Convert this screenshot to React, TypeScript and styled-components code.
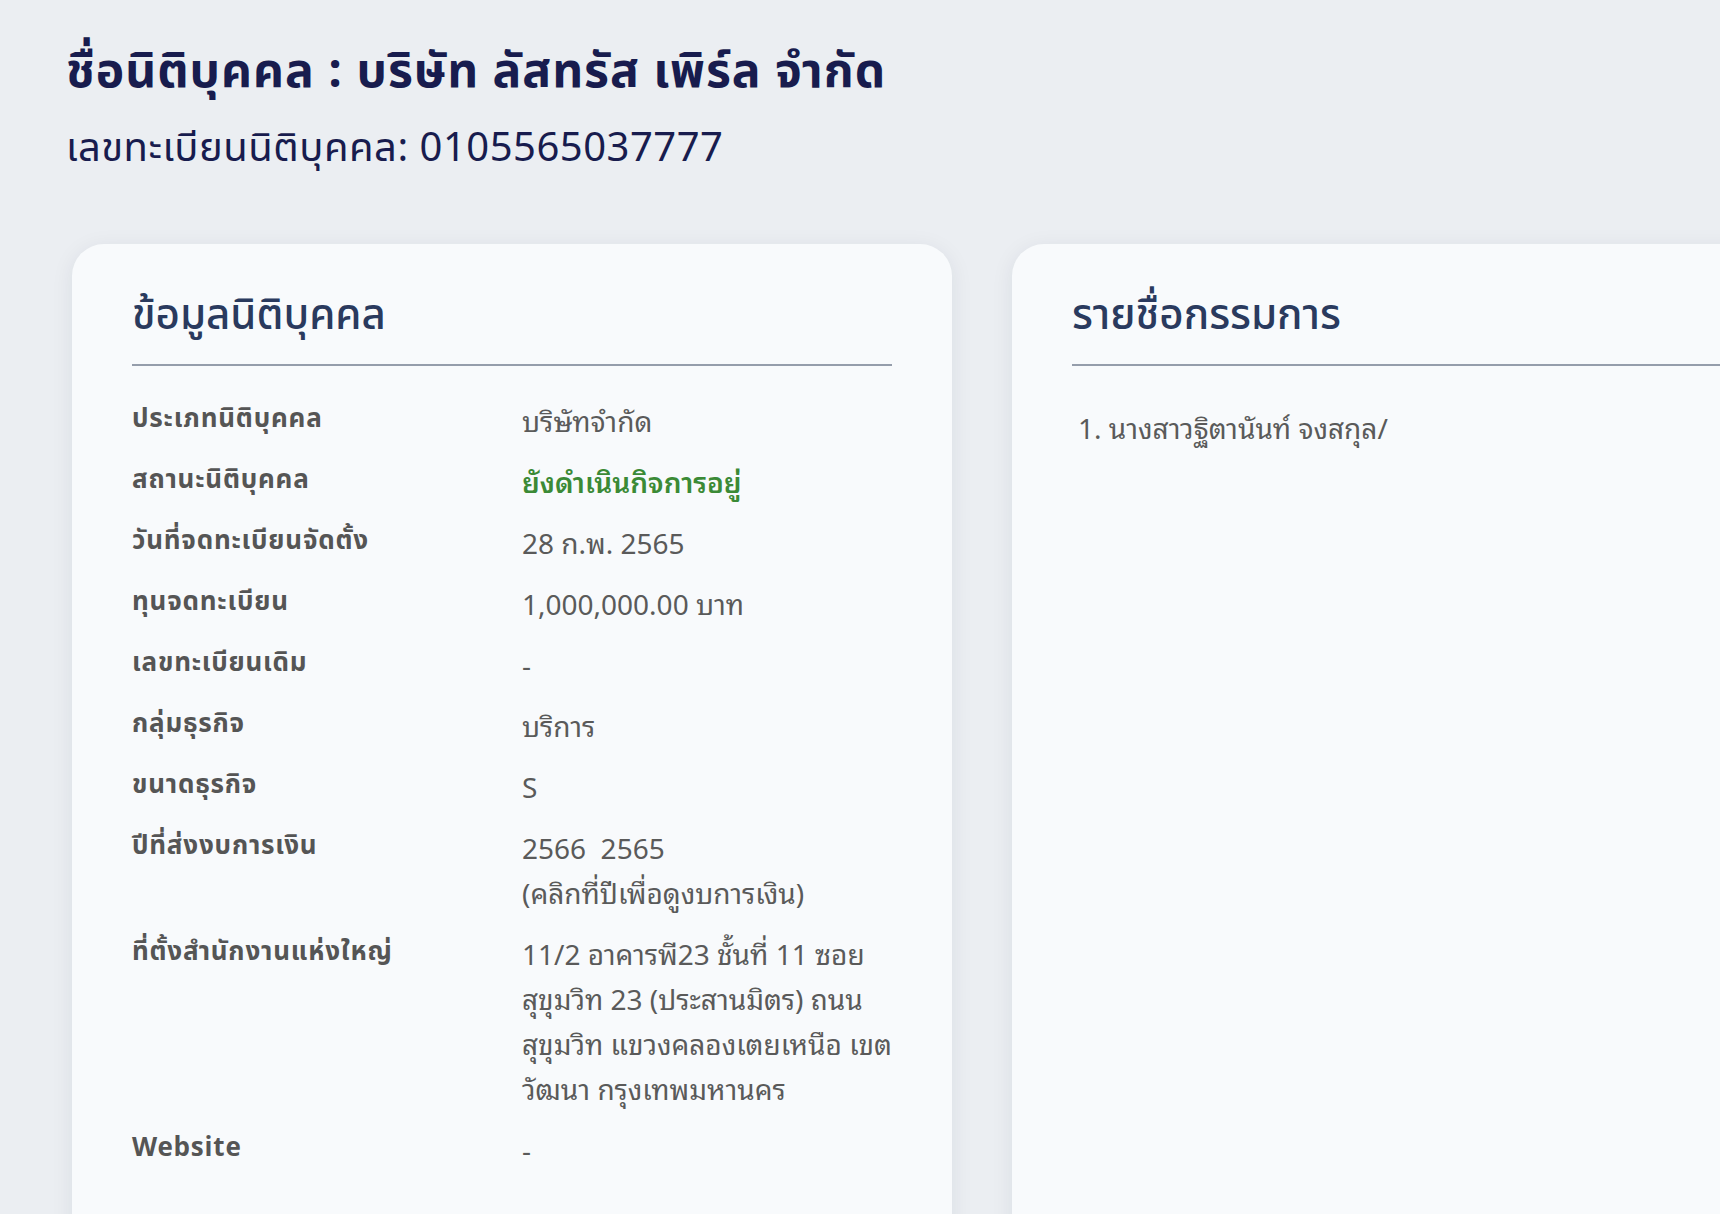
import { Fragment } from 'react';
import styled, { createGlobalStyle } from 'styled-components';

const GlobalStyle = createGlobalStyle`
  html, body {
    margin: 0;
    padding: 0;
    background: #ebeef2;
    overflow: hidden;
  }
  body {
    font-family: "Noto Sans Thai", "Noto Sans", sans-serif;
  }
`;

const Page = styled.div`
  width: 1720px;
  height: 1214px;
  padding: 37px 0 0 66px;
  box-sizing: border-box;
  overflow: hidden;
`;

const CompanyName = styled.h1`
  margin: 0;
  font-family: "Noto Sans Thai", "Noto Sans", sans-serif;
  font-size: 48px;
  font-weight: 700;
  line-height: 72px;
  letter-spacing: 1px;
  color: #181c4e;
`;

const RegNumber = styled.h2`
  margin: 10px 0 0;
  font-family: "Noto Sans Thai", "Noto Sans", sans-serif;
  font-size: 40px;
  font-weight: 400;
  line-height: 60px;
  letter-spacing: 0.5px;
  color: #181c4e;
`;

const CardRow = styled.div`
  display: flex;
  gap: 60px;
  margin: 65px 0 0 6px;
`;

const Card = styled.section`
  flex: 0 0 880px;
  height: 1040px;
  box-sizing: border-box;
  padding: 43px 60px;
  background: #f8fafc;
  border-radius: 32px;
  box-shadow: 0 4px 22px rgba(30, 40, 60, 0.08);
`;

const CardTitle = styled.h3`
  margin: 0;
  padding-bottom: 18px;
  font-family: "Noto Sans Thai", "Noto Sans", sans-serif;
  font-size: 42px;
  font-weight: 500;
  line-height: 1.4;
  color: #2a3a5e;
  border-bottom: 2px solid #959dab;
`;

const InfoGrid = styled.dl`
  display: grid;
  grid-template-columns: 1fr 1fr;
  column-gap: 20px;
  row-gap: 16px;
  margin: 31px 0 0;
`;

const Label = styled.dt`
  margin: 0;
  font-family: "Noto Sans Thai", "Noto Sans", sans-serif;
  font-size: 26px;
  font-weight: 700;
  line-height: 45px;
  letter-spacing: 0.8px;
  color: #555555;
`;

const Value = styled.dd<{ $status?: boolean }>`
  margin: 0;
  font-family: "Noto Sans Thai Looped", "Noto Sans Thai", "Noto Sans", sans-serif;
  font-size: 28px;
  font-weight: ${(p) => (p.$status ? 600 : 400)};
  line-height: 45px;
  color: ${(p) => (p.$status ? '#3b8a36' : '#5a5a5a')};
`;

const Line = styled.div`
  white-space: pre;
`;

const DirectorList = styled.ol`
  list-style: none;
  margin: 38px 0 0;
  padding: 0 0 0 6px;
`;

const Director = styled.li`
  font-family: "Noto Sans Thai Looped", "Noto Sans Thai", "Noto Sans", sans-serif;
  font-size: 28px;
  line-height: 45px;
  color: #5a5a5a;
`;

const info: { label: string; value: string[]; status?: boolean }[] = [
  { label: 'ประเภทนิติบุคคล', value: ['บริษัทจำกัด'] },
  { label: 'สถานะนิติบุคคล', value: ['ยังดำเนินกิจการอยู่'], status: true },
  { label: 'วันที่จดทะเบียนจัดตั้ง', value: ['28 ก.พ. 2565'] },
  { label: 'ทุนจดทะเบียน', value: ['1,000,000.00 บาท'] },
  { label: 'เลขทะเบียนเดิม', value: ['-'] },
  { label: 'กลุ่มธุรกิจ', value: ['บริการ'] },
  { label: 'ขนาดธุรกิจ', value: ['S'] },
  { label: 'ปีที่ส่งงบการเงิน', value: ['2566  2565', '(คลิกที่ปีเพื่อดูงบการเงิน)'] },
  {
    label: 'ที่ตั้งสำนักงานแห่งใหญ่',
    value: [
      '11/2 อาคารพี23 ชั้นที่ 11 ซอย',
      'สุขุมวิท 23 (ประสานมิตร) ถนน',
      'สุขุมวิท แขวงคลองเตยเหนือ เขต',
      'วัฒนา กรุงเทพมหานคร',
    ],
  },
  { label: 'Website', value: ['-'] },
];

const App = () => {
  return (
    <>
      <GlobalStyle />
      <Page>
        <CompanyName>ชื่อนิติบุคคล : บริษัท ลัสทรัส เพิร์ล จำกัด</CompanyName>
        <RegNumber>เลขทะเบียนนิติบุคคล: 0105565037777</RegNumber>
        <CardRow>
          <Card>
            <CardTitle>ข้อมูลนิติบุคคล</CardTitle>
            <InfoGrid>
              {info.map((row) => (
                <Fragment key={row.label}>
                  <Label>{row.label}</Label>
                  <Value $status={row.status}>
                    {row.value.map((line, i) => (
                      <Line key={i}>{line}</Line>
                    ))}
                  </Value>
                </Fragment>
              ))}
            </InfoGrid>
          </Card>
          <Card>
            <CardTitle>รายชื่อกรรมการ</CardTitle>
            <DirectorList>
              <Director>1. นางสาวฐิตานันท์ จงสกุล/</Director>
            </DirectorList>
          </Card>
        </CardRow>
      </Page>
    </>
  );
};

export default App;
